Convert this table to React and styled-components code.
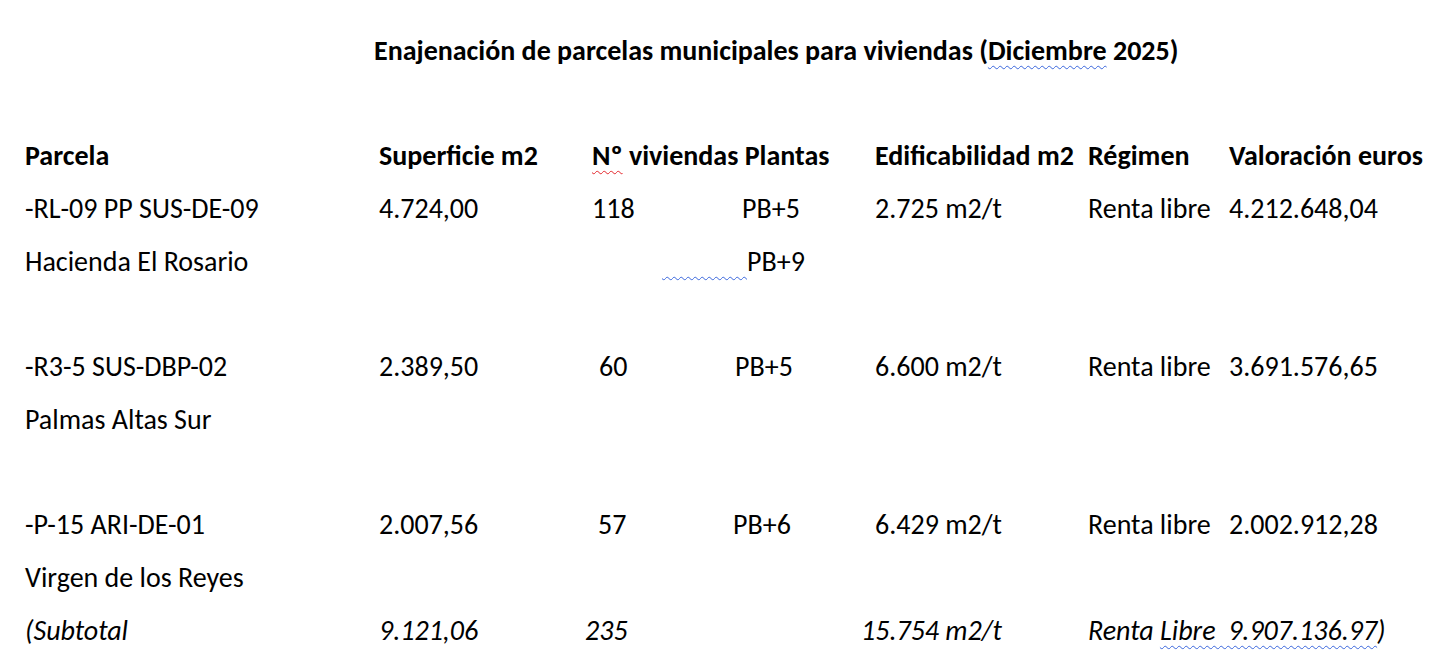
import React from 'react';
import styled, { createGlobalStyle, css } from 'styled-components';

const LINE = 52.7;

const GlobalStyle = createGlobalStyle`
  html, body {
    margin: 0;
    padding: 0;
    background: #ffffff;
  }
  body {
    font-family: Carlito, Calibri, "Open Sans", "Liberation Sans", sans-serif;
    font-size: 28px;
    color: #000000;
  }
`;

const Page = styled.div`
  width: 1438px;
  height: 668px;
  overflow: hidden;
  padding-top: 25px;
  box-sizing: border-box;
`;

const Title = styled.h1`
  margin: 0 0 ${LINE}px 0;
  padding-left: 374px;
  height: ${LINE}px;
  line-height: ${LINE}px;
  font-size: 28px;
  font-weight: 700;
  white-space: nowrap;
`;

const Row = styled.div`
  display: grid;
  grid-template-columns: 354px 213px 150px 133px 213px 141px 1fr;
  padding-left: 25px;
  height: ${LINE}px;
  line-height: ${LINE}px;
  align-items: center;
  white-space: nowrap;
  margin-top: ${(p) => (p.$gapBefore ? `${LINE}px` : '0')};
  ${(p) => p.$head && css`font-weight: 700;`}
  ${(p) => p.$italic && css`font-style: italic;`}
`;

const Cell = styled.div`
  grid-column: ${(p) => p.$col} / span ${(p) => p.$span || 1};
  margin-left: ${(p) => p.$shift || 0}px;
  display: flex;
  align-items: center;
`;

const Squiggle = styled.span`
  text-decoration-line: underline;
  text-decoration-style: wavy;
  text-decoration-color: ${(p) => (p.$red ? '#e3262b' : '#3a66dc')};
  text-decoration-thickness: 1.3px;
  text-underline-offset: 5px;
  text-decoration-skip-ink: none;
`;

const Gap = styled(Squiggle)`
  display: inline-block;
  width: ${(p) => p.$w}px;
  margin-left: ${(p) => p.$at}px;
  overflow: hidden;
`;

const rows = [
  {
    lines: [
      { parcel: '-RL-09 PP SUS-DE-09', area: '4.724,00', count: '118', countShift: 0, floors: 'PB+5', floorsShift: 0, build: '2.725 m2/t', regime: 'Renta libre', value: '4.212.648,04' },
      { parcel: 'Hacienda El Rosario', extraFloors: 'PB+9' },
    ],
  },
  {
    lines: [
      { parcel: '-R3-5 SUS-DBP-02', area: '2.389,50', count: '60', countShift: 7, floors: 'PB+5', floorsShift: -7, build: '6.600 m2/t', regime: 'Renta libre', value: '3.691.576,65' },
      { parcel: 'Palmas Altas Sur' },
    ],
  },
  {
    lines: [
      { parcel: '-P-15 ARI-DE-01', area: '2.007,56', count: '57', countShift: 6, floors: 'PB+6', floorsShift: -9, build: '6.429 m2/t', regime: 'Renta libre', value: '2.002.912,28' },
      { parcel: 'Virgen de los Reyes' },
    ],
  },
];

function DataLine({ line, gapBefore }) {
  return (
    <Row $gapBefore={gapBefore}>
      <Cell $col={1}>{line.parcel}</Cell>
      {line.area && <Cell $col={2}>{line.area}</Cell>}
      {line.count && <Cell $col={3} $shift={line.countShift}>{line.count}</Cell>}
      {line.floors && <Cell $col={4} $shift={line.floorsShift}>{line.floors}</Cell>}
      {line.extraFloors && (
        <Cell $col={3} $span={2}>
          <Gap $at={70} $w={85}>{'\u00a0'.repeat(30)}</Gap>
          {line.extraFloors}
        </Cell>
      )}
      {line.build && <Cell $col={5}>{line.build}</Cell>}
      {line.regime && <Cell $col={6}>{line.regime}</Cell>}
      {line.value && <Cell $col={7}>{line.value}</Cell>}
    </Row>
  );
}

export default function App() {
  return (
    <>
      <GlobalStyle />
      <Page>
        <Title>
          Enajenación de parcelas municipales para viviendas (<Squiggle>Diciembre</Squiggle> 2025)
        </Title>

        <Row $head>
          <Cell $col={1}>Parcela</Cell>
          <Cell $col={2}>Superficie m2</Cell>
          <Cell $col={3} $span={2}>
            <Squiggle $red>Nº</Squiggle>&nbsp;viviendas Plantas
          </Cell>
          <Cell $col={5}>Edificabilidad m2</Cell>
          <Cell $col={6}>Régimen</Cell>
          <Cell $col={7}>Valoración euros</Cell>
        </Row>

        {rows.map((group, gi) =>
          group.lines.map((line, li) => (
            <DataLine key={`${gi}-${li}`} line={line} gapBefore={gi > 0 && li === 0} />
          ))
        )}

        <Row $italic>
          <Cell $col={1}>(Subtotal</Cell>
          <Cell $col={2}>9.121,06</Cell>
          <Cell $col={3} $shift={-7}>235</Cell>
          <Cell $col={5} $shift={-14}>15.754 m2/t</Cell>
          <Cell $col={6} $span={2}>
            Renta&nbsp;<Squiggle>Libre&nbsp;&nbsp;9.907.136.97</Squiggle>)
          </Cell>
        </Row>
      </Page>
    </>
  );
}
